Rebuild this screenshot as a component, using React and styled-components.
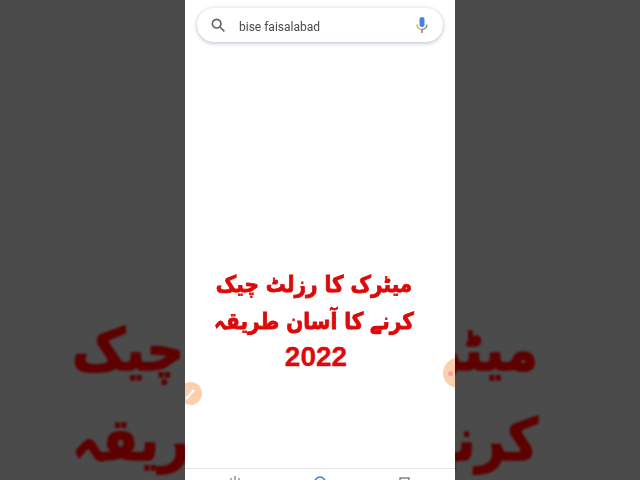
import React from "react";
import styled, { createGlobalStyle } from "styled-components";

const Global = createGlobalStyle`
  html, body { margin: 0; padding: 0; width: 640px; height: 480px; overflow: hidden; background: #4b4b4b; }
  #root { width: 640px; height: 480px; }
`;

const Stage = styled.div`
  width: 640px;
  height: 480px;
  display: flex;
  overflow: hidden;
  background: #4b4b4b;
`;

const SidePanel = styled.aside`
  flex: none;
  width: 185px;
  height: 480px;
  overflow: hidden;
  box-sizing: border-box;
  display: flex;
  flex-direction: column;
  align-items: ${(p) => (p.$side === "left" ? "flex-start" : "flex-end")};
  padding: 305px ${(p) => (p.$side === "left" ? "0 0 72px" : "102px 0 0")};
`;

const GhostLine = styled.div`
  flex: none;
  font: bold ${(p) => p.$size || 48}px/90px "DejaVu Sans", sans-serif;
  -webkit-text-stroke: 1.4px #5e0000;
  color: #5e0000;
  direction: rtl;
  white-space: nowrap;
  transform: scaleY(1.12);
  filter: blur(0.9px);
`;

const Phone = styled.main`
  position: relative;
  width: 270px;
  height: 480px;
  flex: none;
  background: #fff;
  display: flex;
  flex-direction: column;
  align-items: center;
`;

const SearchBar = styled.div`
  margin-top: 8px;
  width: 246px;
  height: 34px;
  border-radius: 17px;
  background: #fff;
  box-shadow: 0 1px 4px rgba(70, 80, 120, 0.4);
  display: flex;
  align-items: center;
  flex: none;
  padding: 0 14px 0 13px;
  box-sizing: border-box;
`;

const SearchText = styled.span`
  flex: 1;
  margin: 3px 0 0 13px;
  font: 12px "Roboto", sans-serif;
  color: #4a4a4a;
  filter: blur(0.2px);
`;

const Headline = styled.h1`
  margin: 224px 12px 0 0;
  width: 270px;
  text-align: center;
  font: bold 20px/36.5px "DejaVu Sans", sans-serif;
  color: #dc0a0a;
  direction: rtl;
  white-space: nowrap;
`;

const HeadlineLine = styled.span`
  display: block;
  -webkit-text-stroke: 0.7px #dc0a0a;
  transform: scaleY(1.15);
`;

const Year = styled.span`
  display: block;
  font-family: "Liberation Sans", sans-serif;
  font-size: 28px;
  -webkit-text-stroke: 0.3px #dc0a0a;
  margin-right: -4px;
`;

const EdgeBubble = styled.div`
  position: absolute;
  top: ${(p) => p.$top}px;
  ${(p) => (p.$side === "left" ? `left: ${p.$offset}px;` : `right: ${p.$offset}px;`)}
  width: ${(p) => p.$size}px;
  height: ${(p) => p.$size}px;
  border-radius: 50%;
  background: #fbd0ae;
  display: flex;
  align-items: center;
  justify-content: center;
  filter: blur(0.4px);
`;

const Clip = styled.div`
  position: absolute;
  inset: 0;
  overflow: hidden;
  pointer-events: none;
`;

const Dot = styled.span`
  width: 5px;
  height: 5px;
  border-radius: 50%;
  background: #f7a29a;
  margin-right: 16px;
`;

const BottomNav = styled.nav`
  position: absolute;
  left: 0;
  right: 0;
  bottom: 0;
  height: 12px;
  border-top: 1px solid #e6e6e6;
  box-sizing: border-box;
  display: flex;
  justify-content: space-between;
  padding: 6px 43px 0 43px;
  overflow: hidden;
`;

const NavGlyph = styled.svg`
  width: 14px;
  height: 14px;
  flex: none;
  display: block;
`;

const Search = () => (
  <svg width="16" height="16" viewBox="0 0 24 24" fill="none" stroke="#5f6368" strokeWidth="2.4">
    <circle cx="10" cy="10" r="6.5" />
    <path d="M15 15l6.5 6.5" />
  </svg>
);

const Mic = () => (
  <svg width="14" height="18" viewBox="0 0 14 18" fill="none">
    <rect x="4.5" y="1" width="5" height="10" rx="2.5" fill="#4a80d8" />
    <path d="M2 8.5c0 3 2.2 4.8 5 4.8" stroke="#d9a33a" strokeWidth="1.3" />
    <path d="M12 8.5c0 3-2.2 4.8-5 4.8" stroke="#55966a" strokeWidth="1.3" />
    <path d="M7 13.3V17" stroke="#c9554a" strokeWidth="1.4" />
  </svg>
);

export default function App() {
  return (
    <Stage>
      <Global />
      <SidePanel $side="left">
        <GhostLine $size={52}>چیک</GhostLine>
        <GhostLine $size={52}>طریقہ</GhostLine>
      </SidePanel>
      <Phone>
        <SearchBar>
          <Search />
          <SearchText>bise faisalabad</SearchText>
          <Mic />
        </SearchBar>
        <Headline>
          <HeadlineLine>میٹرک کا رزلٹ چیک</HeadlineLine>
          <HeadlineLine>کرنے کا آسان طریقہ</HeadlineLine>
          <Year>2022</Year>
        </Headline>
        <Clip>
          <EdgeBubble $side="left" $top={382} $size={23} $offset={-6}>
            <svg width="12" height="12" viewBox="0 0 12 12">
              <path d="M1 11l8-9" stroke="#fff" strokeWidth="2" />
            </svg>
          </EdgeBubble>
          <EdgeBubble $side="right" $top={358} $size={30} $offset={-18}>
            <Dot />
          </EdgeBubble>
        </Clip>
        <BottomNav>
          <NavGlyph viewBox="0 0 14 14"><path d="M3 3v11M7 1v13M11 3v11" stroke="#777" strokeWidth="1.2" /></NavGlyph>
          <NavGlyph viewBox="0 0 14 14"><circle cx="7" cy="7" r="5" fill="none" stroke="#3b78d8" strokeWidth="1.6" /></NavGlyph>
          <NavGlyph viewBox="0 0 14 14"><rect x="2" y="3" width="9" height="10" fill="none" stroke="#666" strokeWidth="1.2" /></NavGlyph>
        </BottomNav>
      </Phone>
      <SidePanel $side="right">
        <GhostLine $size={52}>میٹرک</GhostLine>
        <GhostLine $size={52}>کرنے</GhostLine>
      </SidePanel>
    </Stage>
  );
}
